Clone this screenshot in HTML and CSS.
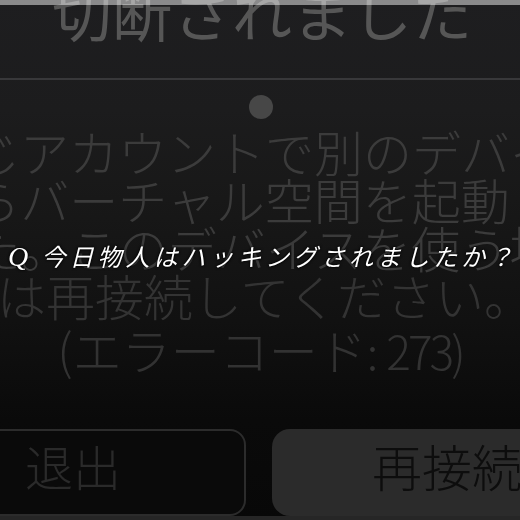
FILE: index.html
```html
<!DOCTYPE html>
<html lang="ja">
<head>
<meta charset="utf-8">
<title>切断されました</title>
<link rel="stylesheet" href="styles.css">
</head>
<body>
<div class="screen">
  <div class="title-row"><span class="title">切断されました</span></div>
  <div class="top-glare"></div>
  <div class="rule"></div>
  <div class="dot"></div>
  <div class="para">
    <div class="line">じアカウントで別のデバイ</div>
    <div class="line">らバーチャル空間を起動し</div>
    <div class="line">た。このデバイスを使う場</div>
    <div class="line">は再接続してください。</div>
  </div>
  <div class="code">(エラーコード<span class="code-colon">:</span><span class="code-num">273)</span></div>
  <div class="buttons">
    <div class="btn btn-exit">退出</div>
    <div class="btn btn-reconnect">再接続</div>
  </div>
  <div class="bottom-edge"></div>
  <div class="caption"><span class="q">Q</span> 今日物人はハッキングされましたか？</div>
</div>
</body>
</html>
```

FILE: styles.css
```css
html, body {
  margin: 0;
  padding: 0;
  background: #080808;
}
.screen {
  position: relative;
  width: 520px;
  height: 520px;
  overflow: hidden;
  background: linear-gradient(#1e1e20 0px, #1c1c1d 110px, #181818 200px, #111111 320px, #0a0a0a 420px, #080808 520px);
  font-family: "Noto Sans CJK JP", "Noto Sans", sans-serif;
}
.title-row {
  display: flex;
  justify-content: center;
  height: 60px;
  margin-top: -19px;
}
.title {
  font-size: 60px;
  line-height: 60px;
  color: #565656;
  white-space: nowrap;
  padding-left: 4px;
}
.top-glare {
  position: absolute;
  left: 0;
  top: 0;
  width: 520px;
  height: 5px;
  background: #7a7a7a;
  mix-blend-mode: screen;
}
.rule {
  margin-top: 37px;
  height: 2px;
  background: #38383a;
}
.dot {
  width: 24px;
  height: 24px;
  border-radius: 50%;
  background: #474747;
  margin: 15px auto 0;
  position: relative;
  left: 1px;
}
.para {
  margin-top: 8px;
  margin-left: -29px;
  width: 588px;
  text-align: center;
  font-size: 49px;
  line-height: 48px;
  font-weight: 300;
  color: #3b3b3b;
  white-space: nowrap;
}
.line:nth-child(4) {
  color: #333333;
}
.code {
  margin-top: 6px;
  text-align: center;
  font-size: 49px;
  line-height: 48px;
  font-weight: 300;
  color: #323232;
  white-space: nowrap;
}
.code-colon {
  font-size: 46px;
  margin-right: 8px;
}
.code-num {
  font-size: 46px;
  letter-spacing: -3px;
}
.buttons {
  display: flex;
  gap: 26px;
  margin-top: 55px;
  margin-left: -100px;
}
.btn {
  flex: 0 0 auto;
  width: 346px;
  height: 87px;
  box-sizing: border-box;
  display: flex;
  align-items: center;
  justify-content: center;
  white-space: nowrap;
  font-weight: 300;
  line-height: 48px;
  padding-bottom: 16px;
}
.btn-exit {
  border: 2px solid #2c2c2c;
  border-radius: 16px;
  background: #0a0a0a;
  color: #2a2a2a;
  font-size: 48px;
}
.btn-reconnect {
  background: #2b2b2b;
  border-radius: 18px;
  color: #0d0d0d;
  font-size: 50px;
  padding-left: 4px;
}
.bottom-edge {
  height: 5px;
  background: #262626;
}
.caption {
  position: absolute;
  left: 8px;
  top: 241px;
  font-size: 24px;
  line-height: 30px;
  letter-spacing: 4px;
  color: #ffffff;
  font-style: italic;
  white-space: nowrap;
  text-shadow: 0 0 3px #000, 0 0 2px #000;
  font-family: "Noto Sans CJK JP", sans-serif;
  font-weight: 400;
}
.q {
  font-family: "Liberation Serif", serif;
  font-size: 28px;
}
```
